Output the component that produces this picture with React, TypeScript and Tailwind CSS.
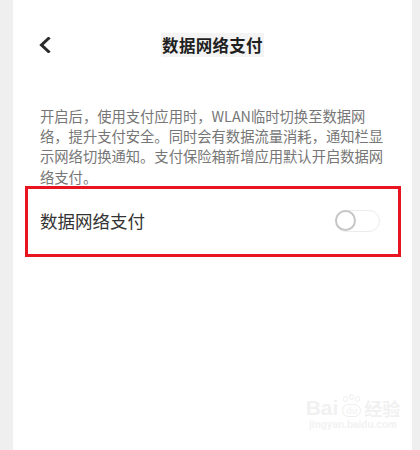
import React from "react";

export default function App() {
  const font = { fontFamily: '"Noto Sans CJK SC", "Noto Sans", sans-serif' };
  return (
    <div className="w-[420px] h-[450px] bg-[#efefef] overflow-hidden" style={font}>
      <div className="relative ml-[13px] w-[399px] h-[450px] bg-white flex flex-col">
        {/* header */}
        <div className="relative h-[90px] flex items-start justify-center pt-[33px]">
          <svg
            className="absolute left-[25px] top-[37px]"
            width="14"
            height="16"
            viewBox="0 0 14 16"
            fill="none"
          >
            <path d="M10.5 1.5 L3.5 8 L10.5 14.5" stroke="#2b2b2b" strokeWidth="3" strokeLinecap="square" strokeLinejoin="miter" />
          </svg>
          <span className="bg-[#f4f4f4] text-[16.5px] leading-[24px] font-bold text-[#1f1f1f] px-[1px] tracking-[0.3px]">
            数据网络支付
          </span>
        </div>
        {/* description */}
        <div className="pl-[27px] pr-[14px] pt-[16px] text-[14.3px] leading-[20.2px] text-[#767676]">
          开启后，使用支付应用时，WLAN临时切换至数据网
          <br />
          络，提升支付安全。同时会有数据流量消耗，通知栏显
          <br />
          示网络切换通知。支付保险箱新增应用默认开启数据网
          <br />
          络支付。
        </div>
        {/* red box row */}
        <div className="ml-[12px] mt-[-1px] w-[376px] h-[71px] border-[3px] border-[#e8141f] flex items-center justify-between pl-[12px] pr-[18px]">
          <span className="text-[17.5px] text-[#333333] leading-[24px]">数据网络支付</span>
          <div className="relative w-[45px] h-[22px] rounded-full border-[1.5px] border-[#ececec] bg-white">
            <div className="absolute left-[-1px] top-[-1px] w-[21px] h-[21px] rounded-full border-[2.5px] border-[#c6c6c6] bg-white" />
          </div>
        </div>
        {/* watermark */}
        <div className="absolute left-[290px] top-[396px] w-[100px] flex flex-col items-center">
          <div className="flex items-end gap-[2px] text-[#f1f1f1]">
            <span className="text-[21px] leading-[20px] font-bold" style={{ fontFamily: '"Liberation Sans", sans-serif' }}>Bai</span>
            <div className="relative w-[22px] h-[22px]">
              <div className="absolute left-[3px] top-0 w-[5px] h-[6px] rounded-full border border-[#eeeeee]" />
              <div className="absolute left-[9px] top-[-2px] w-[5px] h-[6px] rounded-full border border-[#eeeeee]" />
              <div className="absolute left-[15px] top-0 w-[5px] h-[6px] rounded-full border border-[#eeeeee]" />
              <div className="absolute left-[2px] top-[8px] w-[19px] h-[13px] rounded-full border border-[#eeeeee] flex items-center justify-center text-[9px] leading-none">du</div>
            </div>
            <span className="text-[18px] leading-[20px] font-bold">经验</span>
          </div>
          <span className="text-[10px] leading-[14px] text-[#f2f2f2] font-bold" style={{ fontFamily: '"Liberation Sans", sans-serif' }}>jingyan.baidu.com</span>
        </div>
      </div>
    </div>
  );
}
